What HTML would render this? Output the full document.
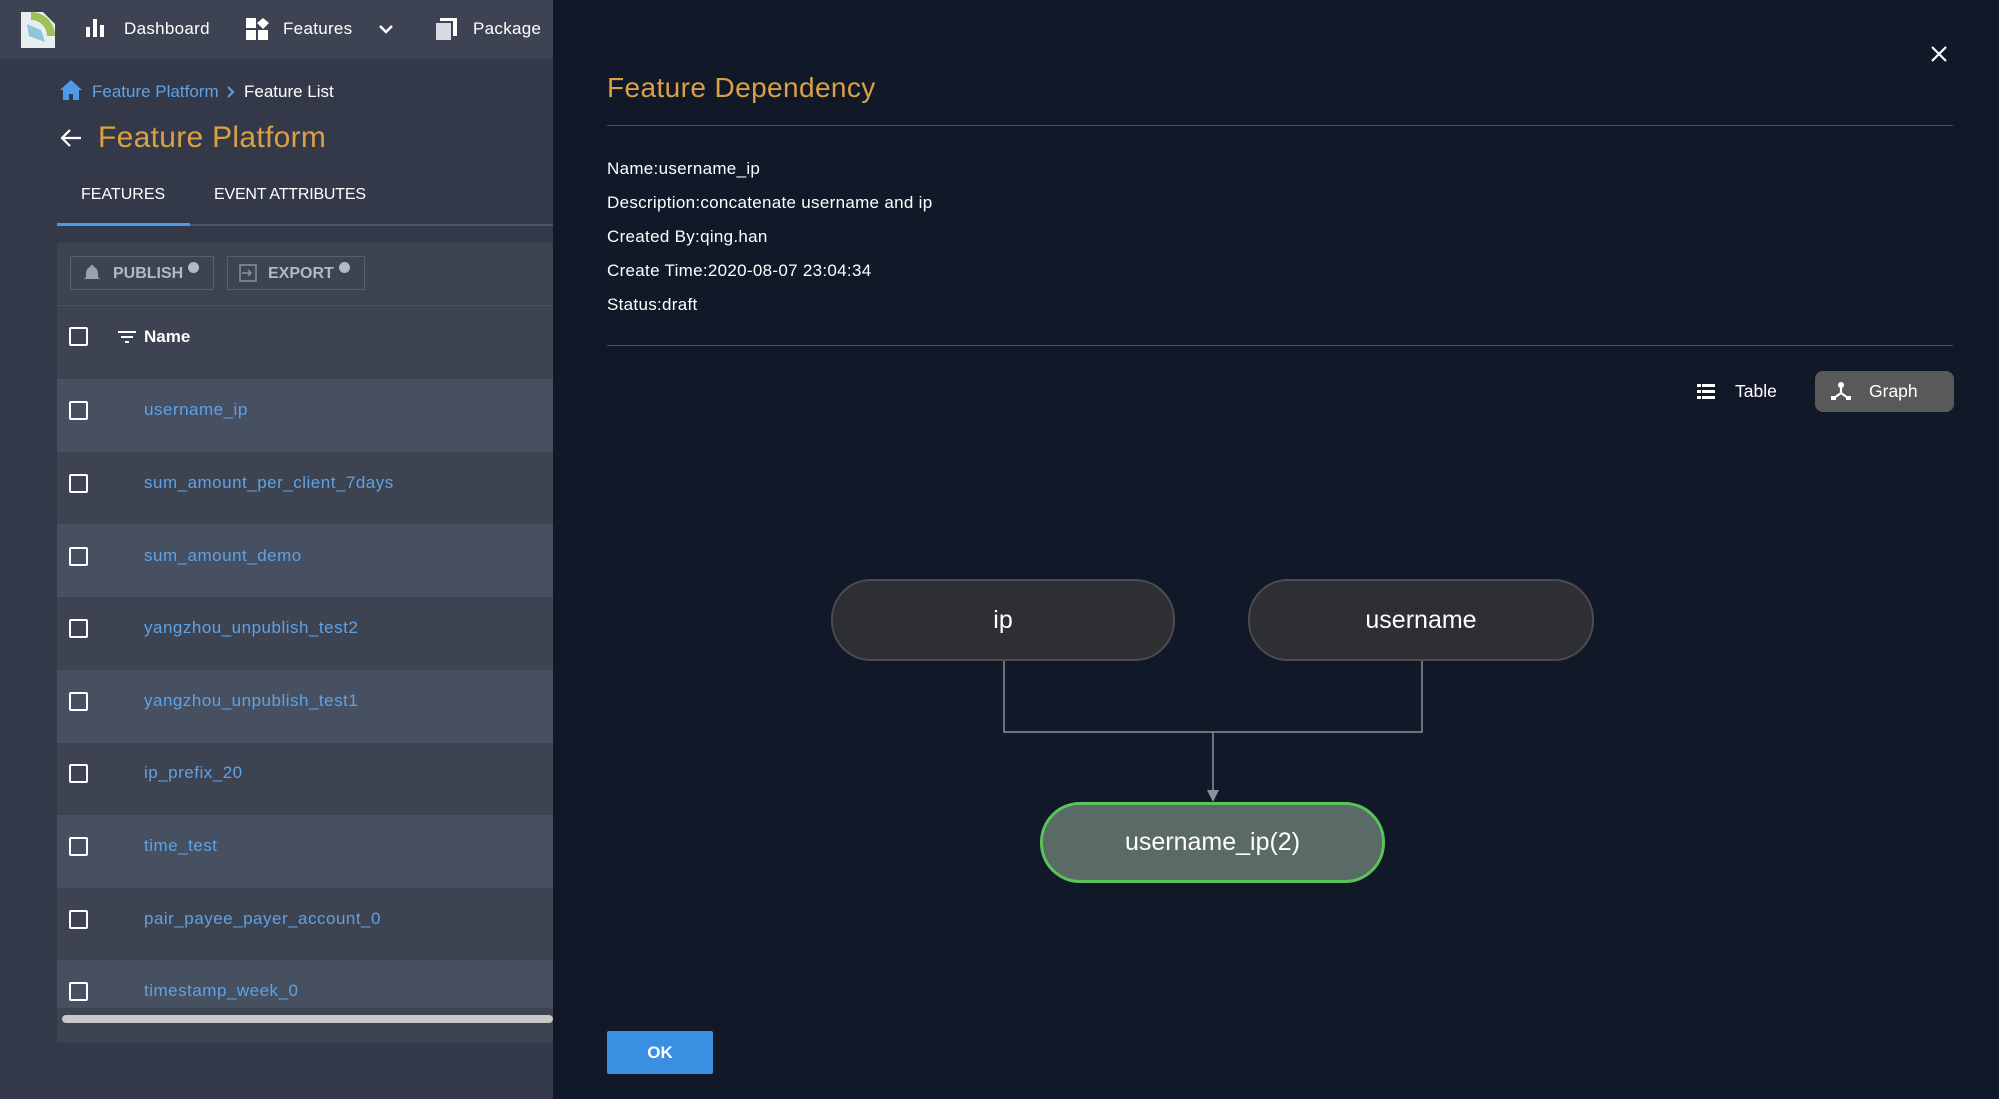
<!DOCTYPE html>
<html><head><meta charset="utf-8"><style>
*{margin:0;padding:0;box-sizing:border-box}
body{width:1999px;height:1099px;overflow:hidden;background:#333949;font-family:"Liberation Sans",sans-serif;position:relative}
.abs{position:absolute}
.nav{left:0;top:0;width:553px;height:59px;background:#3d4352}
.navtxt{color:#fff;font-size:17px;top:19px;letter-spacing:0.3px}
.cb{position:absolute;left:69px;width:19px;height:19px;border:2px solid #fff;border-radius:2px}
.row{position:absolute;left:57px;width:496px;height:73px}
.rn{position:absolute;left:144px;color:#5ea2e6;font-size:17px;letter-spacing:0.5px}
.modal{left:553px;top:0;width:1446px;height:1099px;background:#111828}
.info{position:absolute;left:607px;color:#fff;font-size:17px;letter-spacing:0.3px}
.node{position:absolute;border-radius:40px;display:flex;align-items:center;justify-content:center;color:#fff;font-size:25px}
</style></head><body>
<div class="abs nav"></div>
<svg class="abs" style="left:19px;top:10px" width="40" height="40" viewBox="0 0 40 40"><path d="M2 2h22l12 12v24H2z" fill="#e8eef0"/><path d="M12 2a24 24 0 0 1 24 24h-8A16 16 0 0 0 12 10z" fill="#9bc25a"/><path d="M8 14l14 6 4 12-16-6z" fill="#8fc6dc"/></svg>
<svg class="abs" style="left:86px;top:19px" width="20" height="18"><rect x="0" y="8" width="4" height="10" fill="#fff"/><rect x="7" y="0" width="4" height="18" fill="#fff"/><rect x="14" y="6" width="4" height="12" fill="#fff"/></svg>
<div class="abs navtxt" style="left:124px">Dashboard</div>
<svg class="abs" style="left:246px;top:18px" width="24" height="24"><rect x="0" y="0" width="10" height="10" fill="#fff"/><rect x="0" y="12" width="10" height="10" fill="#fff"/><rect x="12" y="12" width="10" height="10" fill="#fff"/><path d="M17 0l6 5-6 6-6-6z" fill="#fff"/></svg>
<div class="abs navtxt" style="left:283px">Features</div>
<svg class="abs" style="left:378px;top:24px" width="16" height="12"><path d="M2 2l6 6 6-6" stroke="#fff" stroke-width="2.5" fill="none"/></svg>
<svg class="abs" style="left:435px;top:18px" width="22" height="24"><rect x="5" y="0" width="17" height="18" fill="#fff"/><rect x="0" y="4" width="17" height="19" fill="#d8dbe4" stroke="#3d4352" stroke-width="2"/></svg>
<div class="abs navtxt" style="left:473px">Package</div>

<svg class="abs" style="left:59px;top:79px" width="24" height="22"><path d="M12 1L1 11h3v10h6v-6h4v6h6V11h3z" fill="#4d9be8"/></svg>
<div class="abs" style="left:92px;top:82px;color:#5ea2e6;font-size:17px">Feature Platform</div>
<svg class="abs" style="left:226px;top:85px" width="10" height="14"><path d="M2 2l5 5-5 5" stroke="#5ea2e6" stroke-width="2" fill="none"/></svg>
<div class="abs" style="left:244px;top:82px;color:#fff;font-size:17px">Feature List</div>
<svg class="abs" style="left:59px;top:127px" width="24" height="22"><path d="M22 11H3M11 3l-8 8 8 8" stroke="#fff" stroke-width="2.2" fill="none"/></svg>
<div class="abs" style="left:98px;top:121px;color:#dba043;font-size:30px;letter-spacing:0.3px">Feature Platform</div>
<div class="abs" style="left:81px;top:186px;color:#fff;font-size:16px">FEATURES</div>
<div class="abs" style="left:214px;top:186px;color:#fff;font-size:16px;letter-spacing:-0.2px">EVENT ATTRIBUTES</div>
<div class="abs" style="left:57px;top:224px;width:496px;height:2px;background:#4d5668"></div>
<div class="abs" style="left:57px;top:223px;width:133px;height:3px;background:#4d9be8"></div>

<div class="abs" style="left:57px;top:243px;width:496px;height:800px;background:#3d4350"></div>
<div class="abs" style="left:57px;top:305px;width:496px;height:1px;background:#4a5160"></div>
<div class="abs" style="left:70px;top:256px;width:144px;height:34px;border:1px solid #586070;border-radius:2px"></div>
<svg class="abs" style="left:83px;top:264px" width="18" height="18"><path d="M9 1c-1 0-2 1-2 2-3 1-4 4-4 7v3l-2 2h16l-2-2v-3c0-3-1-6-4-7 0-1-1-2-2-2z" fill="#9aa1ad"/></svg>
<div class="abs" style="left:113px;top:265px;color:#b3b8c2;font-size:16px;font-weight:bold">PUBLISH</div>
<div class="abs" style="left:188px;top:262px;width:11px;height:11px;border-radius:50%;background:#b3b8c2"></div>
<div class="abs" style="left:227px;top:256px;width:138px;height:34px;border:1px solid #586070;border-radius:2px"></div>
<svg class="abs" style="left:239px;top:264px" width="18" height="18"><rect x="1" y="1" width="16" height="16" fill="none" stroke="#8a919d" stroke-width="1.5"/><path d="M3 9h9M9 6l3 3-3 3" stroke="#8a919d" stroke-width="1.5" fill="none"/></svg>
<div class="abs" style="left:268px;top:265px;color:#b3b8c2;font-size:16px;font-weight:bold">EXPORT</div>
<div class="abs" style="left:339px;top:262px;width:11px;height:11px;border-radius:50%;background:#b3b8c2"></div>
<div class="cb" style="top:327px"></div>
<svg class="abs" style="left:117px;top:330px" width="20" height="14"><path d="M1 2h18M4 7h12M8 12h4" stroke="#fff" stroke-width="2"/></svg>
<div class="abs" style="left:144px;top:327px;color:#fff;font-size:17px;font-weight:bold">Name</div>

<div class="row" style="top:379px;background:#465060"></div>
<div class="row" style="top:524px;background:#465060"></div>
<div class="row" style="top:670px;background:#465060"></div>
<div class="row" style="top:815px;background:#465060"></div>
<div class="row" style="top:960px;height:48px;background:#465060"></div>
<div class="cb" style="top:401px"></div><div class="rn" style="top:400px">username_ip</div>
<div class="cb" style="top:474px"></div><div class="rn" style="top:473px">sum_amount_per_client_7days</div>
<div class="cb" style="top:547px"></div><div class="rn" style="top:546px">sum_amount_demo</div>
<div class="cb" style="top:619px"></div><div class="rn" style="top:618px">yangzhou_unpublish_test2</div>
<div class="cb" style="top:692px"></div><div class="rn" style="top:691px">yangzhou_unpublish_test1</div>
<div class="cb" style="top:764px"></div><div class="rn" style="top:763px">ip_prefix_20</div>
<div class="cb" style="top:837px"></div><div class="rn" style="top:836px">time_test</div>
<div class="cb" style="top:910px"></div><div class="rn" style="top:909px">pair_payee_payer_account_0</div>
<div class="cb" style="top:982px"></div><div class="rn" style="top:981px">timestamp_week_0</div>
<div class="abs" style="left:62px;top:1015px;width:491px;height:8px;border-radius:4px;background:#c8c8c8"></div>

<div class="abs modal"></div>
<svg class="abs" style="left:1930px;top:45px" width="18" height="18"><path d="M2 2l14 14M16 2L2 16" stroke="#fff" stroke-width="2.2"/></svg>
<div class="abs" style="left:607px;top:72px;color:#dba043;font-size:28px;letter-spacing:0.4px">Feature Dependency</div>
<div class="abs" style="left:607px;top:125px;width:1346px;height:1px;background:#4a4f5a"></div>
<div class="info" style="top:159px">Name:username_ip</div>
<div class="info" style="top:193px">Description:concatenate username and ip</div>
<div class="info" style="top:227px">Created By:qing.han</div>
<div class="info" style="top:261px">Create Time:2020-08-07 23:04:34</div>
<div class="info" style="top:295px">Status:draft</div>
<div class="abs" style="left:607px;top:345px;width:1346px;height:1px;background:#4a4f5a"></div>
<svg class="abs" style="left:1697px;top:384px" width="18" height="15"><rect x="0" y="0" width="4" height="3" fill="#fff"/><rect x="5" y="0" width="13" height="3" fill="#fff"/><rect x="0" y="6" width="4" height="3" fill="#fff"/><rect x="5" y="6" width="13" height="3" fill="#fff"/><rect x="0" y="12" width="4" height="3" fill="#fff"/><rect x="5" y="12" width="13" height="3" fill="#fff"/></svg>
<div class="abs" style="left:1735px;top:381px;color:#fff;font-size:17.5px">Table</div>
<div class="abs" style="left:1815px;top:371px;width:139px;height:41px;border-radius:8px;background:#595959"></div>
<svg class="abs" style="left:1831px;top:381px" width="20" height="20"><circle cx="10" cy="4" r="3" fill="#fff"/><path d="M10 6v6L3 17M10 12l7 5" stroke="#fff" stroke-width="2.2" fill="none"/><rect x="0" y="15" width="5" height="4" fill="#fff"/><rect x="15" y="15" width="5" height="4" fill="#fff"/></svg>
<div class="abs" style="left:1869px;top:381px;color:#fff;font-size:17.5px">Graph</div>

<svg class="abs" style="left:0;top:0" width="1999" height="1099"><path d="M1004 661V732H1422V661M1213 732V792" stroke="#8a8f99" stroke-width="1.5" fill="none"/><path d="M1207 790h12l-6 12z" fill="#8a8f99"/></svg>
<div class="node" style="left:831px;top:579px;width:344px;height:82px;background:#2e2f33;border:2px solid #4b4c50">ip</div>
<div class="node" style="left:1248px;top:579px;width:346px;height:82px;background:#2e2f33;border:2px solid #4b4c50">username</div>
<div class="node" style="left:1040px;top:802px;width:345px;height:81px;background:#5a6a66;border:3px solid #5cc25a">username_ip(2)</div>

<div class="abs" style="left:607px;top:1031px;width:106px;height:43px;background:#3a8fe3;border-radius:2px;color:#fff;font-size:17px;font-weight:bold;display:flex;align-items:center;justify-content:center">OK</div>
</body></html>
